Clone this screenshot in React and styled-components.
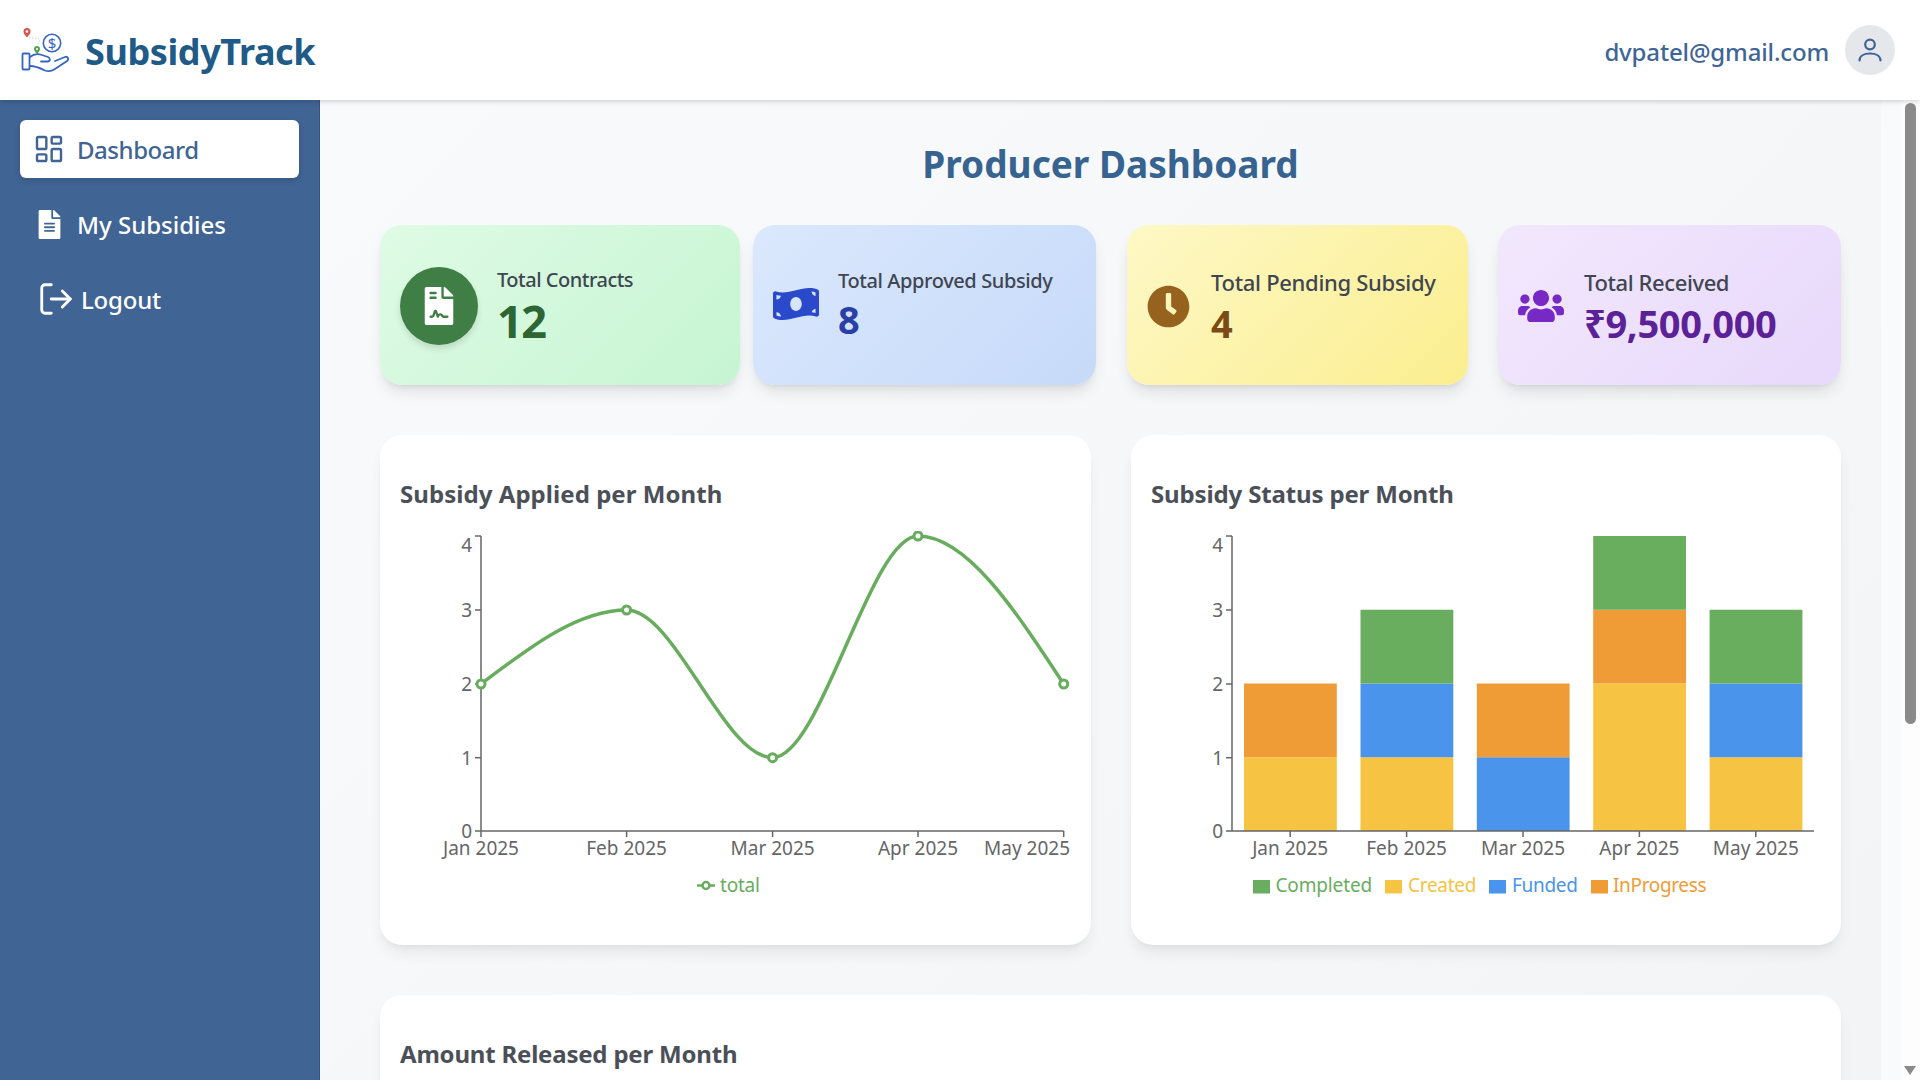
import React from "react";
import styled, { createGlobalStyle } from "styled-components";
import { LayoutDashboard, LogOut } from "lucide-react";
import { FaFileAlt, FaFileContract, FaMoneyBillWave, FaClock, FaUsers } from "react-icons/fa";

const Global = createGlobalStyle`
  html, body { margin: 0; padding: 0; height: 100%; overflow: hidden; }
  body { font-family: "Noto Sans", "Open Sans", sans-serif; background: #f9fafb; }
  * { box-sizing: border-box; }
`;

const Page = styled.div`
  width: 1920px;
  height: 1080px;
  display: flex;
  flex-direction: column;
  overflow: hidden;
`;

const Header = styled.header`
  height: 100px;
  flex: none;
  background: #fff;
  display: flex;
  align-items: center;
  justify-content: space-between;
  padding: 0 25px 0 20px;
  box-shadow: 0 1px 6px rgba(0, 0, 0, 0.2);
  position: relative;
  z-index: 2;
`;

const Brand = styled.div`
  display: flex;
  align-items: center;
  gap: 15px;
`;

const BrandName = styled.span`
  font-size: 36px;
  font-weight: 700;
  color: #205a86;
  letter-spacing: -0.4px;
  padding-top: 2px;
`;

const UserBox = styled.div`
  display: flex;
  align-items: center;
  gap: 16px;
`;

const Email = styled.span`
  font-size: 24px;
  font-weight: 500;
  color: #3f6595;
  letter-spacing: -0.15px;
  padding-top: 2px;
`;

const Avatar = styled.div`
  width: 50px;
  height: 50px;
  border-radius: 50%;
  background: #e5e7eb;
  display: flex;
  align-items: center;
  justify-content: center;
`;

const Body = styled.div`
  flex: 1;
  display: flex;
  min-height: 0;
`;

const Sidebar = styled.aside`
  width: 320px;
  flex: none;
  background: #406494;
  border-right: 1px solid #35557f;
  padding: 20px 20px 0;
  display: flex;
  flex-direction: column;
  gap: 17px;
`;

const NavItem = styled.div`
  width: 279px;
  height: 58px;
  flex: none;
  display: flex;
  align-items: center;
  gap: ${(p) => p.$gap}px;
  padding-left: ${(p) => p.$pad}px;
  border-radius: 6px;
  font-size: 24px;
  font-weight: 500;
  letter-spacing: ${(p) => p.$ls}px;
  color: ${(p) => (p.$active ? "#406494" : "#fff")};
  background: ${(p) => (p.$active ? "#fff" : "transparent")};
  box-shadow: ${(p) => (p.$active ? "0 2px 6px rgba(0,0,0,.15)" : "none")};
`;

const Content = styled.main`
  width: 1561px;
  flex: none;
  overflow: hidden;
  padding: 42px 40px 0 60px;
  background: linear-gradient(135deg, #f9fafb, #f3f4f6);
`;

const Gutter = styled.div`
  flex: 1;
  background: #f9fafb;
`;

const ScrollTrack = styled.div`
  width: 19px;
  flex: none;
  background: #fdfdfd;
  position: relative;
`;

const ScrollThumb = styled.div`
  position: absolute;
  left: 4px;
  top: 3px;
  width: 11px;
  height: 621px;
  border-radius: 6px;
  background: #8a8a8a;
`;

const ScrollArrow = styled.div`
  position: absolute;
  left: 3px;
  bottom: 5px;
  width: 0;
  height: 0;
  border-left: 6.5px solid transparent;
  border-right: 6.5px solid transparent;
  border-top: 9px solid #8a8a8a;
`;

const Title = styled.h1`
  margin: 0 0 39px;
  height: 44px;
  line-height: 44px;
  text-align: center;
  font-size: 37px;
  font-weight: 700;
  color: #36638f;
`;

const Stats = styled.div`
  display: flex;
  height: 160px;
  margin-bottom: 50px;
`;

const StatCard = styled.div`
  width: ${(p) => p.$w}px;
  margin-left: ${(p) => p.$ml}px;
  flex: none;
  display: flex;
  align-items: center;
  gap: ${(p) => p.$gap}px;
  padding: ${(p) => p.$pt || 0}px 0 ${(p) => p.$pb || 0}px 20px;
  border-radius: 22px;
  background: linear-gradient(135deg, ${(p) => p.$from}, ${(p) => p.$to});
  box-shadow: 0 10px 15px -3px rgba(0, 0, 0, 0.1), 0 4px 6px -4px rgba(0, 0, 0, 0.1);
`;

const IconCircle = styled.div`
  width: 78px;
  height: 78px;
  border-radius: 50%;
  background: #3f7f45;
  color: #fff;
  display: flex;
  align-items: center;
  justify-content: center;
  flex: none;
  box-shadow: 0 4px 6px rgba(0, 0, 0, 0.12);
`;

const StatIcon = styled.div`
  display: flex;
  flex: none;
  color: ${(p) => p.$color};
`;

const StatText = styled.div`
  display: flex;
  flex-direction: column;
`;

const StatLabel = styled.div`
  font-size: ${(p) => p.$size}px;
  line-height: 28px;
  font-weight: 500;
  color: #3f4652;
  letter-spacing: ${(p) => p.$ls}px;
  white-space: nowrap;
`;

const StatValue = styled.div`
  font-size: ${(p) => p.$size}px;
  line-height: ${(p) => p.$lh}px;
  margin-top: ${(p) => p.$mt}px;
  font-weight: 700;
  color: ${(p) => p.$color};
  letter-spacing: ${(p) => p.$ls || -0.5}px;
  white-space: nowrap;
`;

const ChartRow = styled.div`
  display: grid;
  grid-template-columns: 711px 710px;
  column-gap: 40px;
  margin-bottom: 50px;
`;

const Panel = styled.section`
  background: #fff;
  border-radius: 22px;
  height: ${(p) => p.$h}px;
  padding: 40px 20px 0;
  box-shadow: 0 10px 15px -3px rgba(0, 0, 0, 0.08), 0 4px 6px -4px rgba(0, 0, 0, 0.06);
`;

const PanelTitle = styled.h2`
  margin: 0 0 19px;
  height: 37px;
  line-height: 37px;
  font-size: 24px;
  font-weight: 700;
  color: #4b5058;
  letter-spacing: ${(p) => p.$ls}px;
`;

const ChartSvg = styled.svg`
  display: block;
  width: 671px;
  height: 380px;
  font-family: "Noto Sans", sans-serif;
  font-size: 19px;
`;

const AxisText = styled.text`
  fill: #666;
`;

const AxisLine = styled.path`
  stroke: #666;
  stroke-width: 1.5;
  fill: none;
`;

function Logo() {
  return (
    <svg width="50" height="46" viewBox="0 0 50 46" fill="none">
      <path d="M7 10.5C4.5 7.5 3.5 6.5 3.5 4.5a3.5 3.5 0 0 1 7 0c0 2-1 3-3.500 6z" fill="#d9534f" />
      <circle cx="7" cy="4.500" r="1.300" fill="#fff" />
      <path d="M9 11h9l2 3-3 4" stroke="#b5b5b5" strokeWidth="0.7" strokeDasharray="1.500 1.500" />
      <path d="M17 27c-2-2.500-3-3.500-3-5a3 3 0 0 1 6 0c0 1.500-1 2.500-3 5z" fill="#5aa34f" />
      <circle cx="17" cy="22" r="1" fill="#fff" />
      <circle cx="32" cy="16" r="8.700" stroke="#3566c0" strokeWidth="1.600" />
      <text x="32" y="21.500" textAnchor="middle" fontSize="15" fontFamily="Noto Sans" fill="#3566c0">$</text>
      <rect x="2.500" y="26.500" width="7" height="16" rx="1" stroke="#3566c0" strokeWidth="1.800" />
      <path
        d="M10 30c4-3.500 8-3.500 12-2l6 2c2.500 1 2.500 4.500-.5 4.500H21M10 39c5 0 10 2 15 4.500 4 1.500 7 .5 10-1.500l12-8c2.500-2 .5-5-2-4l-10 4"
        stroke="#3566c0"
        strokeWidth="1.800"
        strokeLinecap="round"
        strokeLinejoin="round"
      />
    </svg>
  );
}

function UserIcon() {
  return (
    <svg width="26" height="26" viewBox="0 0 26 26" fill="none" stroke="#3f6595" strokeWidth="2.200" strokeLinecap="round">
      <circle cx="13" cy="7.500" r="4.800" />
      <path d="M2.500 23.500c0-4.500 4.500-7 10.500-7s10.500 2.500 10.500 7" />
    </svg>
  );
}

const TICK_Y = [
  [4, 536, 545],
  [3, 610, 610],
  [2, 684, 684],
  [1, 757.7, 758],
  [0, 831, 831],
];
const OY = 531;
const OX = 400;
const yt = (y) => y - OY;

function YAxis({ x }) {
  const cx = x - OX;
  return (
    <g>
      <AxisLine d={`M${cx} ${yt(536)}V${yt(831)}`} />
      {TICK_Y.map(([v, y, ly]) => (
        <g key={v}>
          <AxisLine d={`M${cx - 6} ${yt(y)}H${cx}`} />
          <AxisText x={cx - 9} y={yt(ly) + 7} textAnchor="end">{v}</AxisText>
        </g>
      ))}
    </g>
  );
}

function XAxis({ x0, x1, ticks }) {
  return (
    <g>
      <AxisLine d={`M${x0 - OX} ${yt(831)}H${x1 - OX}`} />
      {ticks.map(([label, x, lx]) => (
        <g key={label}>
          <AxisLine d={`M${x - OX} ${yt(831)}v6`} />
          <AxisText x={(lx || x) - OX} y={yt(854.5)} textAnchor="middle">{label}</AxisText>
        </g>
      ))}
    </g>
  );
}

const GREEN = "#68ac5e";
const POINTS = [
  [481, 684],
  [626.6, 610],
  [772.6, 757.7],
  [918, 536],
  [1063.7, 684],
];

function LineChart() {
  const sx = (x) => x - OX;
  const d = [
    `M${sx(481)} ${yt(684)}`,
    `C${sx(529.5)} ${yt(647.1)} ${sx(578)} ${yt(610)} ${sx(626.6)} ${yt(610)}`,
    `C${sx(675)} ${yt(610)} ${sx(724)} ${yt(757.7)} ${sx(772.6)} ${yt(757.7)}`,
    `C${sx(821)} ${yt(757.7)} ${sx(870)} ${yt(536)} ${sx(918)} ${yt(536)}`,
    `C${sx(966.6)} ${yt(536)} ${sx(1015.2)} ${yt(610)} ${sx(1063.7)} ${yt(684)}`,
  ].join("");
  return (
    <ChartSvg viewBox="0 0 671 380">
      <YAxis x={481} />
      <XAxis
        x0={481}
        x1={1063.7}
        ticks={[
          ["Jan 2025", 481],
          ["Feb 2025", 626.6],
          ["Mar 2025", 772.6],
          ["Apr 2025", 918],
          ["May 2025", 1063.7, 1027],
        ]}
      />
      <path d={d} fill="none" stroke={GREEN} strokeWidth="3.500" />
      {POINTS.map(([x, y]) => (
        <circle key={x} cx={sx(x)} cy={yt(y)} r="4" fill="#fff" stroke={GREEN} strokeWidth="3" />
      ))}
      <path d={`M${697 - OX} ${yt(885.5)}h18`} stroke={GREEN} strokeWidth="2.500" />
      <circle cx={706 - OX} cy={yt(885.5)} r="3.500" fill="#fff" stroke={GREEN} strokeWidth="2.500" />
      <text x={720 - OX} y={yt(892)} fill={GREEN} letterSpacing="-0.2">total</text>
    </ChartSvg>
  );
}

const C = { g: "#69ad5e", y: "#f6c342", b: "#4a94ec", o: "#f09c36" };
const BARS = [
  { x: 1244, s: [["y", 1], ["o", 1]] },
  { x: 1360.5, s: [["y", 1], ["b", 1], ["g", 1]] },
  { x: 1476.8, s: [["b", 1], ["o", 1]] },
  { x: 1593.2, s: [["y", 2], ["o", 1], ["g", 1]] },
  { x: 1709.6, s: [["y", 1], ["b", 1], ["g", 1]] },
];
const UNIT = 73.75;

function BarChart() {
  const OX2 = 1151;
  const bx = (x) => x - OX2 + OX;
  const legend = [
    ["g", 1253, 1275.5, "Completed", -0.15],
    ["y", 1385, 1408, "Created", -0.3],
    ["b", 1489, 1512, "Funded", -0.3],
    ["o", 1591, 1613, "InProgress", -0.35],
  ];
  return (
    <ChartSvg viewBox="0 0 671 380">
      {BARS.map((b) => {
        let acc = 0;
        return b.s.map(([c, n], i) => {
          acc += n;
          return (
            <rect
              key={i}
              x={bx(b.x) - OX}
              y={yt(831) - acc * UNIT}
              width="92.800"
              height={n * UNIT}
              fill={C[c]}
            />
          );
        });
      })}
      <YAxis x={bx(1232)} />
      <XAxis
        x0={bx(1232)}
        x1={bx(1814)}
        ticks={[
          ["Jan 2025", bx(1290.2)],
          ["Feb 2025", bx(1406.6)],
          ["Mar 2025", bx(1523)],
          ["Apr 2025", bx(1639.4)],
          ["May 2025", bx(1755.8)],
        ]}
      />
      {legend.map(([c, sx, tx, label, ls]) => (
        <g key={label}>
          <rect x={bx(sx) - OX} y={yt(880)} width="17" height="13.500" fill={C[c]} />
          <text x={bx(tx) - OX} y={yt(892)} fill={C[c]} letterSpacing={ls}>{label}</text>
        </g>
      ))}
    </ChartSvg>
  );
}

export default function App() {
  return (
    <Page>
      <Global />
      <Header>
        <Brand>
          <Logo />
          <BrandName>SubsidyTrack</BrandName>
        </Brand>
        <UserBox>
          <Email>dvpatel@gmail.com</Email>
          <Avatar>
            <UserIcon />
          </Avatar>
        </UserBox>
      </Header>
      <Body>
        <Sidebar>
          <NavItem $active $pad={13} $gap={12} $ls={-0.45}>
            <LayoutDashboard size={32} strokeWidth={1.8} />
            <span>Dashboard</span>
          </NavItem>
          <NavItem $pad={14.5} $gap={13.5} $ls={0}>
            <FaFileAlt size={29} />
            <span>My Subsidies</span>
          </NavItem>
          <NavItem $pad={17} $gap={6} $ls={-0.2}>
            <LogOut size={38} strokeWidth={1.8} />
            <span>Logout</span>
          </NavItem>
        </Sidebar>
        <Content>
          <Title>Producer Dashboard</Title>
          <Stats>
            <StatCard $w={360} $ml={0} $gap={19} $pt={2} $from="#dffbe5" $to="#c6f5d2">
              <IconCircle>
                <FaFileContract size={38} />
              </IconCircle>
              <StatText>
                <StatLabel $size={20} $ls={-0.5}>Total Contracts</StatLabel>
                <StatValue $size={45} $lh={50} $mt={2} $ls={-1.5} $color="#2d6534">12</StatValue>
              </StatText>
            </StatCard>
            <StatCard $w={343} $ml={13} $gap={19} $pb={2} $from="#dbe8fd" $to="#c6daf9">
              <StatIcon $color="#2b4acb">
                <FaMoneyBillWave size={46} />
              </StatIcon>
              <StatText>
                <StatLabel $size={20} $ls={-0.4}>Total Approved Subsidy</StatLabel>
                <StatValue $size={38} $lh={44} $mt={2} $color="#2a3fa6">8</StatValue>
              </StatText>
            </StatCard>
            <StatCard $w={341} $ml={31} $gap={21} $pt={2} $from="#fef8c6" $to="#fbee8f">
              <StatIcon $color="#96631f">
                <FaClock size={43} />
              </StatIcon>
              <StatText>
                <StatLabel $size={22} $ls={-0.3}>Total Pending Subsidy</StatLabel>
                <StatValue $size={38} $lh={44} $mt={5} $color="#7b4a16">4</StatValue>
              </StatText>
            </StatCard>
            <StatCard $w={343} $ml={30} $gap={20} $pt={2} $from="#f2e8fd" $to="#e8d8fb">
              <StatIcon $color="#7629c5">
                <FaUsers size={46} />
              </StatIcon>
              <StatText>
                <StatLabel $size={22} $ls={-0.4}>Total Received</StatLabel>
                <StatValue $size={38} $lh={44} $mt={5} $ls={-0.3} $color="#5b2196">₹9,500,000</StatValue>
              </StatText>
            </StatCard>
          </Stats>
          <ChartRow>
            <Panel $h={510}>
              <PanelTitle $ls={0.05}>Subsidy Applied per Month</PanelTitle>
              <LineChart />
            </Panel>
            <Panel $h={510}>
              <PanelTitle $ls={-0.15}>Subsidy Status per Month</PanelTitle>
              <BarChart />
            </Panel>
          </ChartRow>
          <Panel $h={400}>
            <PanelTitle $ls={-0.2}>Amount Released per Month</PanelTitle>
          </Panel>
        </Content>
        <Gutter />
        <ScrollTrack>
          <ScrollThumb />
          <ScrollArrow />
        </ScrollTrack>
      </Body>
    </Page>
  );
}
